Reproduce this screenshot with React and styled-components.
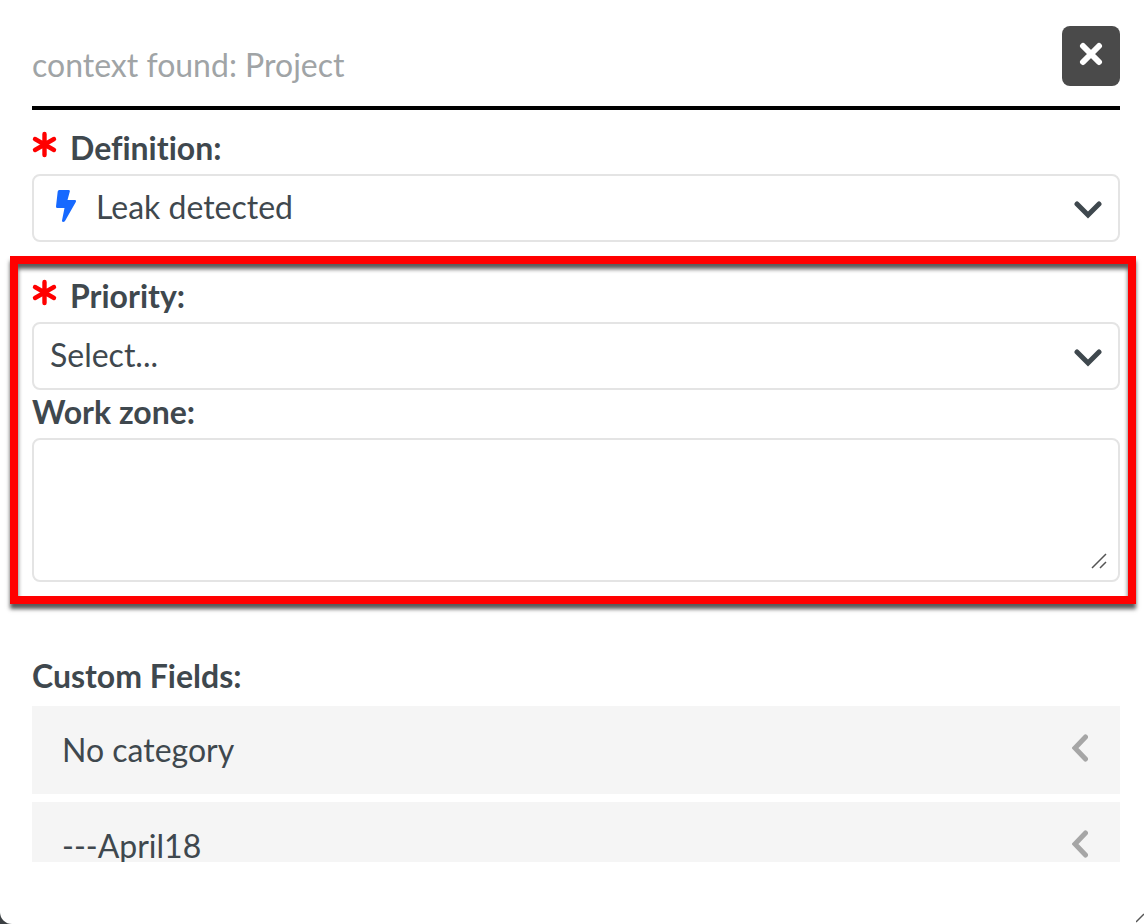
import React from "react";
import styled, { createGlobalStyle, css } from "styled-components";

const ink = "#3f484e";

const GlobalStyle = createGlobalStyle`
  *, *::before, *::after { box-sizing: border-box; }
  body { margin: 0; background: #3c4043; }
  body, button, select, textarea {
    font-family: Lato, "Open Sans", sans-serif;
    font-size: 32px;
    line-height: 40px;
    font-variant-ligatures: none;
    color: ${ink};
  }
`;

const Dialog = styled.main`
  position: relative;
  display: flex;
  flex-direction: column;
  height: 100vh;
  padding: 26px 8px 62px 10px;
  background: #fff;
  border-bottom-left-radius: 12px;
  overflow: hidden;
`;

const inset = css`
  margin-left: 22px;
  margin-right: 16px;
`;

const Header = styled.header`
  ${inset}
  display: flex;
  flex: none;
  align-items: flex-start;
  justify-content: space-between;
  height: 84px;
  border-bottom: 4px solid #000;
`;

const Title = styled.h1`
  margin: 0;
  padding-top: 19px;
  font-size: 32px;
  line-height: 40px;
  font-weight: 400;
  color: #a0a4a6;
`;

const CloseButton = styled.button`
  display: flex;
  justify-content: center;
  width: 58px;
  height: 60px;
  padding: 16px 0 0;
  border: 0;
  border-radius: 8px;
  background: #4a4a4a;
`;

const Field = styled.div`
  display: flex;
  flex-direction: column;
`;

const DefinitionField = styled(Field)`
  ${inset}
  flex: none;
  padding: 16px 0 14px;
`;

const Label = styled.label`
  display: flex;
  align-items: center;
  gap: 14px;
  height: 48px;
  padding-bottom: 4px;
  font-weight: 700;
`;

const RequiredMark = styled.svg`
  width: 24px;
  height: 34px;
  overflow: visible;
`;

const Control = styled.div`
  display: grid;
  align-items: center;
  & > * { grid-area: 1 / 1; }
`;

const box = css`
  width: 100%;
  margin: 0;
  border: 2px solid #e4e4e4;
  border-radius: 8px;
  background: #fff;
  outline: none;
`;

const Select = styled.select`
  ${box}
  appearance: none;
  height: 68px;
  padding: 0 64px 2px ${(p) => (p.$withIcon ? 62 : 16)}px;
`;

const TextArea = styled.textarea`
  ${box}
  display: block;
  height: 144px;
  padding: 12px 16px;
  resize: none;
`;

const Chevron = styled.svg`
  justify-self: end;
  width: 28px;
  height: 20px;
  margin-top: 2px;
  margin-right: 18px;
  pointer-events: none;
`;

const Bolt = styled.svg`
  width: 20px;
  height: 32px;
  margin-left: 24px;
  margin-bottom: 4px;
  pointer-events: none;
`;

const Grip = styled.svg`
  place-self: end;
  width: 16px;
  height: 16px;
  margin: 0 13px 13px 0;
  pointer-events: none;
`;

const Highlight = styled.section`
  flex: none;
  padding: 10px 8px 14px 14px;
  border: 8px solid #f00;
  box-shadow: 0 5px 4px rgba(0, 0, 0, 0.65), inset 0 5px 4px rgba(0, 0, 0, 0.65);
`;

const CustomFields = styled.section`
  ${inset}
  flex: 1;
  min-height: 0;
  margin-top: 52px;
  overflow: hidden;
`;

const SectionTitle = styled.h2`
  margin: 0 0 10px;
  font-size: 32px;
  line-height: 40px;
  font-weight: 700;
`;

const Accordion = styled.div`
  display: flex;
  flex-direction: column;
  gap: 8px;
`;

const AccordionRow = styled.button`
  display: flex;
  align-items: center;
  justify-content: space-between;
  height: 88px;
  padding: 0 32px 4px 30px;
  border: 0;
  background: #f5f5f5;
  text-align: left;
`;

const RowLabel = styled.span`
  padding-top: 4px;
`;

const CornerGrip = styled.svg`
  position: absolute;
  right: 0;
  bottom: 0;
  width: 8px;
  height: 12px;
`;

const Required = () => (
  <RequiredMark viewBox="0 0 24 34" aria-hidden="true">
    <path d="M12.500 3v21M3 8l19 11M22 8L3 19" stroke="#f00" strokeWidth="4.400" strokeLinecap="round" />
  </RequiredMark>
);

const ChevronDown = () => (
  <Chevron viewBox="0 0 28 20" fill="none" aria-hidden="true">
    <path d="M3 5l11 11 11-11" stroke={ink} strokeWidth="5" strokeLinecap="round" />
  </Chevron>
);

const categories = ["No category", "---April18"];

export default function App() {
  return (
    <>
      <GlobalStyle />
      <Dialog>
        <Header>
          <Title>context found: Project</Title>
          <CloseButton aria-label="Close">
            <svg width="24" height="24" viewBox="0 0 24 24" aria-hidden="true">
              <path d="M4 4l16 16M20 4L4 20" stroke="#fff" strokeWidth="6" strokeLinecap="round" />
            </svg>
          </CloseButton>
        </Header>

        <DefinitionField>
          <Label htmlFor="definition"><Required />Definition:</Label>
          <Control>
            <Select id="definition" $withIcon>
              <option>Leak detected</option>
            </Select>
            <Bolt viewBox="0 0 20 32" aria-hidden="true">
              <path d="M3.200 0H12.500Q14.200 0 13.800 1.500L11.500 10H19Q20.500 10 19.800 12L9 31Q8.300 32 7 32Q5.700 31.500 6 30.500L8.500 18H1.200Q0 18 0 16.500L1.700 1.500Q2 0 3.200 0Z" fill="#1769ff" />
            </Bolt>
            <ChevronDown />
          </Control>
        </DefinitionField>

        <Highlight>
          <Field>
            <Label htmlFor="priority"><Required />Priority:</Label>
            <Control>
              <Select id="priority">
                <option>Select...</option>
              </Select>
              <ChevronDown />
            </Control>
          </Field>
          <Field>
            <Label htmlFor="work-zone">Work zone:</Label>
            <Control>
              <TextArea id="work-zone" />
              <Grip viewBox="0 0 16 16" aria-hidden="true">
                <path d="M1 15L15 1M9 15l6-6" stroke="#555" strokeWidth="1.500" />
              </Grip>
            </Control>
          </Field>
        </Highlight>

        <CustomFields>
          <SectionTitle>Custom Fields:</SectionTitle>
          <Accordion>
            {categories.map((name) => (
              <AccordionRow key={name} aria-expanded="false">
                <RowLabel>{name}</RowLabel>
                <svg width="16" height="28" viewBox="0 0 16 28" fill="none" aria-hidden="true">
                  <path d="M13.500 3L3 14l10.500 11" stroke="#a6a6a6" strokeWidth="5" strokeLinecap="round" />
                </svg>
              </AccordionRow>
            ))}
          </Accordion>
        </CustomFields>

        <CornerGrip viewBox="0 0 8 12" aria-hidden="true">
          <path d="M0 10L8 2" stroke="#555" strokeWidth="1.500" />
        </CornerGrip>
      </Dialog>
    </>
  );
}
